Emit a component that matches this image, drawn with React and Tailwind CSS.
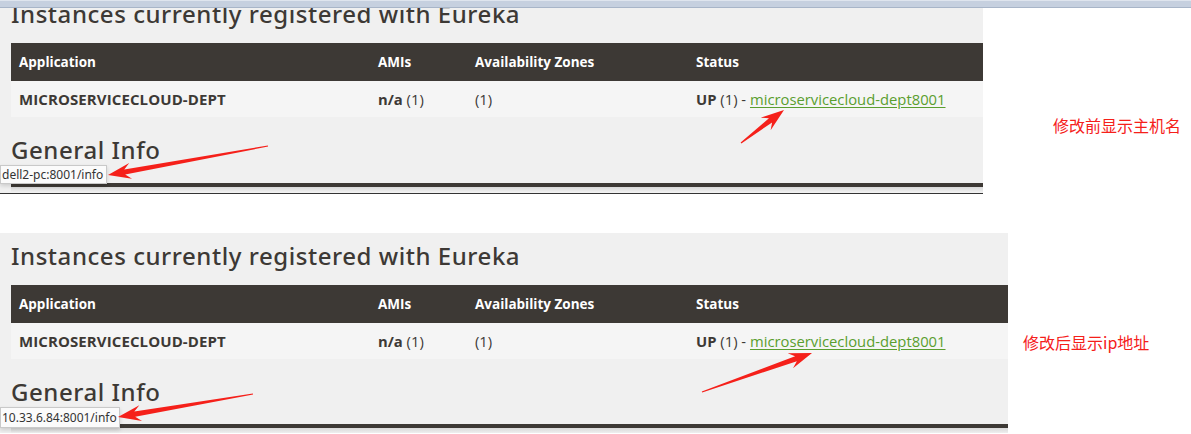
const cols = [
  { w: "w-[359px]", label: "Application" },
  { w: "w-[97px]", label: "AMIs" },
  { w: "w-[221px]", label: "Availability Zones" },
  { w: "flex-1", label: "Status" },
];

const heading = "text-[24px] leading-none text-[#3d3935] font-medium tracking-[0.55px]";
const headingFont = { fontFamily: '"Noto Sans", "Open Sans", sans-serif' };

// red screenshot-tool arrow, tail -> tip
const Arrow = ({ from, to }) => {
  const [x1, y1] = from;
  const [x2, y2] = to;
  const len = Math.hypot(x2 - x1, y2 - y1);
  const dx = (x2 - x1) / len;
  const dy = (y2 - y1) / len;
  const nx = -dy;
  const ny = dx;
  const pt = (along, side) => `${x2 - dx * along + nx * side},${y2 - dy * along + ny * side}`;
  const tailA = `${x1 + nx * 0.6},${y1 + ny * 0.6}`;
  const tailB = `${x1 - nx * 0.6},${y1 - ny * 0.6}`;
  const points = [tailA, pt(17, 2.6), pt(23, 8), `${x2},${y2}`, pt(23, -8), pt(17, -2.6), tailB].join(" ");
  return <polygon points={points} fill="#f5201a" />;
};

const Table = () => (
  <div className="text-[#3d3935]" style={{ fontFamily: '"Open Sans", "Noto Sans", sans-serif' }}>
    <div className="flex h-[38px] items-center bg-[#3d3935] text-[13.5px] font-bold text-white">
      {cols.map((c) => (
        <div key={c.label} className={`${c.w} pl-[8px]`}>{c.label}</div>
      ))}
    </div>
    <div className="flex h-[36px] items-center bg-[#f5f5f5] text-[14.8px]">
      <div className="w-[359px] pl-[8px] text-[15px] font-bold tracking-[0.1px]">MICROSERVICECLOUD-DEPT</div>
      <div className="w-[97px] pl-[8px]"><b>n/a</b> (1)</div>
      <div className="w-[221px] pl-[8px]">(1)</div>
      <div className="flex-1 pl-[8px]">
        <b>UP</b> (1) - <a className="text-[#5a9e2f] underline underline-offset-2">microservicecloud-dept8001</a>
      </div>
    </div>
  </div>
);

const Tip = ({ text, className }) => (
  <div
    className={`absolute left-0 flex items-center border border-[#c9c9c9] bg-[#fbfbfb] pl-[1px] text-[12px] text-[#333] shadow-[0_2px_4px_rgba(0,0,0,0.15)] ${className}`}
    style={{ fontFamily: '"Noto Sans", "Noto Sans CJK SC", sans-serif' }}
  >
    {text}
  </div>
);

const Note = ({ text, className }) => (
  <div
    className={`absolute text-[16px] leading-none text-[#f5201a] ${className}`}
    style={{ fontFamily: '"Noto Sans CJK SC", "Noto Sans", sans-serif' }}
  >
    {text}
  </div>
);

export default function App() {
  return (
    <div className="relative h-[434px] w-[1191px] overflow-hidden bg-white">
      {/* browser chrome strip */}
      <div className="relative z-10 h-[8px] border-t border-t-[#dfe5ee] border-b border-b-[#a8b5c8] bg-[#c6d0df]" />

      {/* before */}
      <div className="h-[185px] w-[983px] overflow-hidden bg-[#f0f0f0] pl-[11px]">
        <h1 className={`${heading} mt-[-6px]`} style={headingFont}>Instances currently registered with Eureka</h1>
        <div className="mt-[17px]"><Table /></div>
        <h2 className={`${heading} mt-[21px]`} style={headingFont}>General Info</h2>
        <div className="mt-[21px] h-[4px] bg-[#3d3935]" />
        <div className="h-[6px] bg-gradient-to-b from-[#d9d9d9] to-[#f3f3f3]" />
      </div>
      <div className="h-[1px] w-[983px] bg-[#333]" />

      <div className="h-[39px]" />

      {/* after */}
      <div className="h-[200px] w-[1008px] overflow-hidden bg-[#f0f0f0] pl-[11px] pt-[11px]">
        <h1 className={heading} style={headingFont}>Instances currently registered with Eureka</h1>
        <div className="mt-[17px]"><Table /></div>
        <h2 className={`${heading} mt-[21px]`} style={headingFont}>General Info</h2>
        <div className="mt-[20px] h-[4px] bg-[#3d3935]" />
        <div className="h-[6px] bg-gradient-to-b from-[#d9d9d9] to-[#f3f3f3]" />
      </div>

      <Tip text="dell2-pc:8001/info" className="top-[165px] h-[19px] w-[107px]" />
      <Tip text="10.33.6.84:8001/info" className="top-[407px] h-[21px] w-[120px]" />

      <Note text="修改前显示主机名" className="left-[1053px] top-[117px]" />
      <Note text="修改后显示ip地址" className="left-[1023px] top-[334px]" />

      <svg className="pointer-events-none absolute inset-0" width="1191" height="434">
        <Arrow from={[268, 146]} to={[108, 175]} />
        <Arrow from={[741, 143]} to={[784, 110]} />
        <Arrow from={[253, 394]} to={[118, 417]} />
        <Arrow from={[702, 392]} to={[812, 353]} />
      </svg>
    </div>
  );
}
